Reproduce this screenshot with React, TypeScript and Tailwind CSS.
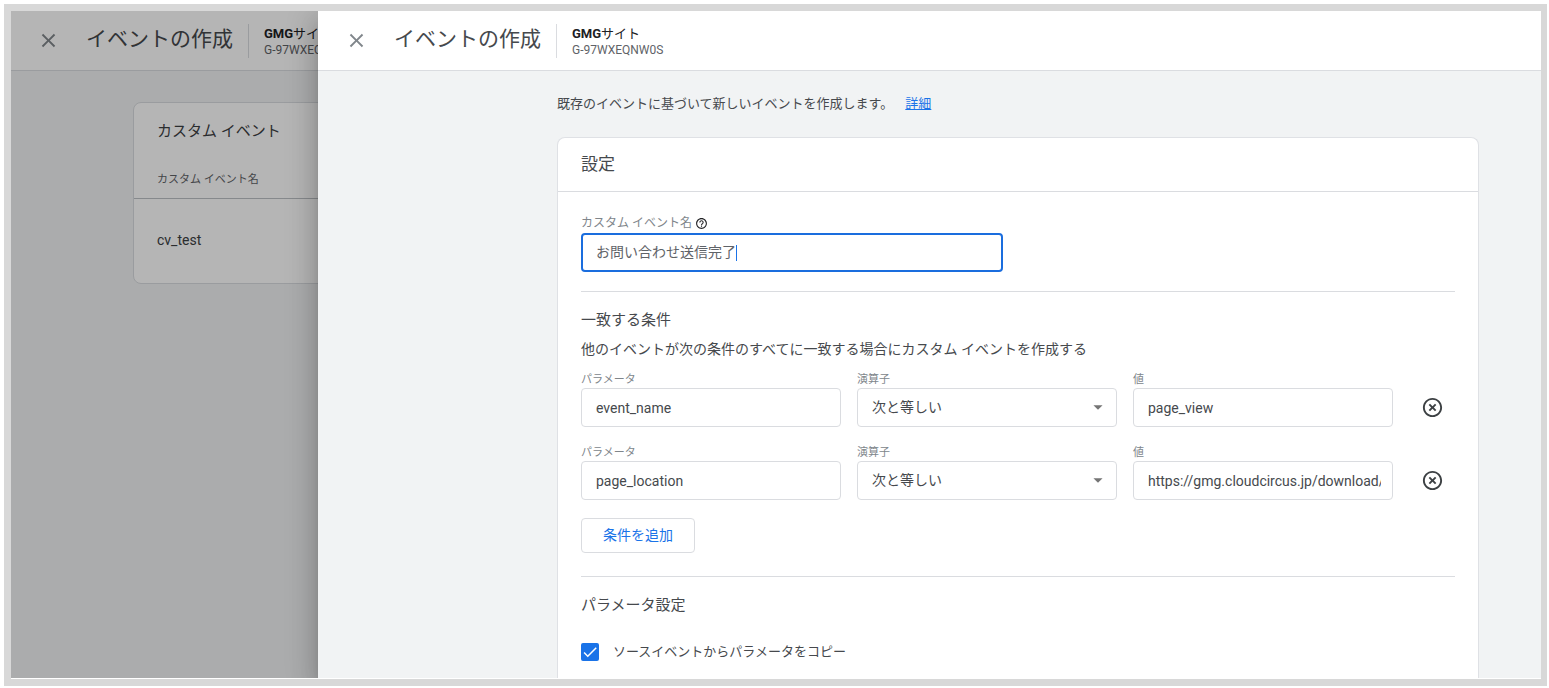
import React from 'react';
import { MdArrowDropDown, MdCheck, MdClose, MdHelpOutline, MdHighlightOff } from 'react-icons/md';

interface Condition {
  id: string;
  parameter: string;
  operator: string;
  value: string;
}

const CONDITIONS: Condition[] = [
  { id: 'c1', parameter: 'event_name', operator: '次と等しい', value: 'page_view' },
  { id: 'c2', parameter: 'page_location', operator: '次と等しい', value: 'https://gmg.cloudcircus.jp/download/' },
];

const OPERATORS = ['次と等しい', '次を含む', '次で始まる', '次で終わる'];

const FIELD =
  'h-[39px] w-full rounded-[4px] border border-[#dadce0] bg-white pl-[14px] pr-[11px] text-[14px] text-[#46494d] outline-none focus:border-[#1a73e8]';

const PanelHeader: React.FC = () => (
  <header className="flex h-[60px] shrink-0 items-center whitespace-nowrap border-b border-[#dadce0] bg-white pl-[26px]">
    <button type="button" aria-label="閉じる" className="flex size-6 items-center justify-center text-[#80868b]">
      <MdClose size={23} />
    </button>
    <h1 className="ml-[26px] pb-[3px] text-[21px] leading-7 text-[#46494d]">イベントの作成</h1>
    <div className="ml-[15px] border-l border-[#dadce0] py-px pl-[15px]">
      <p className="text-[13px] leading-[18px] text-[#202124]">
        <span className="font-bold">GMG</span>サイト
      </p>
      <p className="text-[12px] leading-[14px] text-[#5f6368]">G-97WXEQNW0S</p>
    </div>
  </header>
);

// List page that stays behind the drawer, dimmed by the scrim
const EventListPane: React.FC = () => (
  <div className="relative flex w-[307px] shrink-0 flex-col overflow-hidden bg-[#f1f3f4]">
    <PanelHeader />
    <section className="ml-[122px] mt-[31px] w-[480px] rounded-lg border border-[#dadce0] bg-white">
      <h2 className="px-[23px] pt-4 text-[15px] leading-6 text-[#3c4043]">カスタム イベント</h2>
      <table className="mt-3 w-full text-left">
        <thead>
          <tr className="h-[43px] border-b border-[#bdc1c6]">
            <th className="px-[23px] pt-2 text-[11px] font-normal text-[#5f6368]">カスタム イベント名</th>
          </tr>
        </thead>
        <tbody>
          <tr className="h-[85px]">
            <td className="px-[23px] text-[14px] text-[#3c4043]">cv_test</td>
          </tr>
        </tbody>
      </table>
    </section>
    <div className="absolute inset-0 bg-black/29" />
  </div>
);

const ConditionRow: React.FC<{ condition: Condition }> = ({ condition }) => {
  const { id, parameter, operator, value } = condition;

  return (
    <div className="grid grid-cols-[1fr_1fr_1fr_46px] items-end gap-4">
      <div>
        <label htmlFor={`${id}-param`} className="block text-[11px] leading-4 text-[#80868b]">パラメータ</label>
        <input id={`${id}-param`} type="text" defaultValue={parameter} className={FIELD} />
      </div>
      <div>
        <label htmlFor={`${id}-op`} className="block text-[11px] leading-4 text-[#80868b]">演算子</label>
        <div className="relative">
          <select id={`${id}-op`} defaultValue={operator} className={`${FIELD} appearance-none`}>
            {OPERATORS.map((op) => (
              <option key={op}>{op}</option>
            ))}
          </select>
          <MdArrowDropDown size={22} className="pointer-events-none absolute right-2 top-2 text-[#757575]" />
        </div>
      </div>
      <div>
        <label htmlFor={`${id}-value`} className="block text-[11px] leading-4 text-[#80868b]">値</label>
        <input id={`${id}-value`} type="text" defaultValue={value} className={FIELD} />
      </div>
      <button type="button" aria-label="条件を削除" className="flex h-[39px] items-center justify-center text-[#3c4043]">
        <MdHighlightOff size={23} />
      </button>
    </div>
  );
};

const SettingsCard: React.FC = () => (
  <section className="mt-[22px] grow rounded-t-lg border border-b-0 border-[#dfe1e5] bg-white">
    <h2 className="border-b border-[#dadce0] px-[23px] pb-[13px] pt-3 text-[17px] leading-7 text-[#46494d]">設定</h2>

    <div className="px-[23px]">
      <div className="border-b border-[#dadce0] pb-[19px] pt-[21px]">
        <div className="flex items-center gap-[3px]">
          <label htmlFor="event-name" className="text-[12px] leading-5 text-[#80868b]">カスタム イベント名</label>
          <MdHelpOutline size={13} className="text-[#202124]" />
        </div>
        <div className="flex h-[39px] w-[422px] items-center rounded-[4px] border-2 border-[#1a6dde] pl-[13px]">
          <input
            id="event-name"
            type="text"
            defaultValue="お問い合わせ送信完了"
            className="field-sizing-content bg-transparent text-[14px] text-[#5f6368] outline-none"
          />
          <span className="h-4 w-px bg-[#1a73e8]" />
        </div>
      </div>

      <div className="border-b border-[#dadce0] pb-[23px] pt-4">
        <h3 className="text-[15px] leading-6 text-[#46494d]">一致する条件</h3>
        <p className="mt-[7px] text-[14px] leading-5 text-[#46494d]">
          他のイベントが次の条件のすべてに一致する場合にカスタム イベントを作成する
        </p>
        <div className="mt-[13px] flex flex-col gap-[18px]">
          {CONDITIONS.map((c) => (
            <ConditionRow key={c.id} condition={c} />
          ))}
        </div>
        <button
          type="button"
          className="mt-[18px] h-[35px] rounded-[4px] border border-[#dadce0] px-[21px] text-[14px] text-[#1a73e8]"
        >
          条件を追加
        </button>
      </div>

      <div className="pt-4">
        <h3 className="text-[15px] leading-6 text-[#46494d]">パラメータ設定</h3>
        <div className="mt-[25px] flex items-center gap-[14px]">
          <span className="grid size-[18px] place-items-center">
            <input
              id="copy-params"
              type="checkbox"
              defaultChecked
              className="peer col-start-1 row-start-1 size-[18px] appearance-none rounded-[2px] border-2 border-[#5f6368] checked:border-[#1a73e8] checked:bg-[#1a73e8]"
            />
            <MdCheck size={18} className="pointer-events-none invisible col-start-1 row-start-1 text-white peer-checked:visible" />
          </span>
          <label htmlFor="copy-params" className="text-[13px] leading-5 text-[#46494d]">
            ソースイベントからパラメータをコピー
          </label>
        </div>
      </div>
    </div>
  </section>
);

const App: React.FC = () => (
  <div className="h-screen overflow-hidden bg-white pb-[2px] pl-1 pr-[2px] pt-1 font-[Roboto,'Noto_Sans_CJK_JP',sans-serif]">
    <div className="flex h-full overflow-hidden border-[7px] border-r-[6px] border-[#d8d8d8] pb-px">
      <EventListPane />
      <main className="relative flex min-w-0 grow flex-col bg-[#f1f3f4] shadow-[0_16px_24px_2px_rgba(0,0,0,0.14),0_6px_30px_5px_rgba(0,0,0,0.12),0_8px_10px_-5px_rgba(0,0,0,0.2)] [clip-path:inset(0_0_0_-60px)]">
        <PanelHeader />
        <div className="flex min-h-0 grow flex-col overflow-hidden pl-[239px] pr-[62px] pt-[22px]">
          <p className="text-[13px] leading-[22px] text-[#46494d]">
            既存のイベントに基づいて新しいイベントを作成します。
            <a href="#details" className="ml-3 text-[#1a73e8] underline">詳細</a>
          </p>
          <SettingsCard />
        </div>
      </main>
    </div>
  </div>
);

export default App;
